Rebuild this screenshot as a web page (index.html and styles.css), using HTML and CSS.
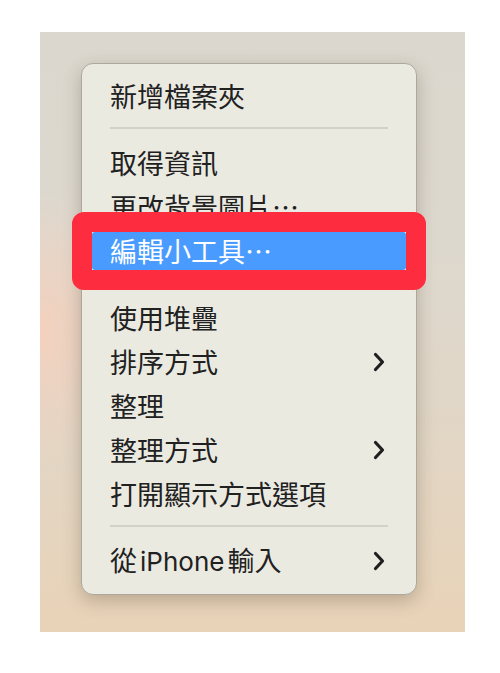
FILE: index.html
```html
<!DOCTYPE html>
<html lang="zh-Hant">
<head>
    <meta charset="UTF-8">
    <meta name="viewport" content="width=device-width, initial-scale=1.0">
    <title>桌面選單</title>
    <link rel="stylesheet" href="styles.css">
</head>
<body>
    <div class="wallpaper">
        <div class="menu">
            <div class="item"><span>新增檔案夾</span></div>
            <div class="separator"></div>
            <div class="item"><span>取得資訊</span></div>
            <div class="item"><span>更改背景圖片…</span></div>
            <div class="item selected"><span>編輯小工具…</span></div>
            <div class="separator"></div>
            <div class="item"><span>使用堆疊</span></div>
            <div class="item">
                <span>排序方式</span>
                <svg class="chevron" viewBox="0 0 12 20"><polyline points="2.5,2.5 9.5,10 2.5,17.5"/></svg>
            </div>
            <div class="item"><span>整理</span></div>
            <div class="item">
                <span>整理方式</span>
                <svg class="chevron" viewBox="0 0 12 20"><polyline points="2.5,2.5 9.5,10 2.5,17.5"/></svg>
            </div>
            <div class="item"><span>打開顯示方式選項</span></div>
            <div class="separator"></div>
            <div class="item">
                <span>從 <span class="latin">iPhone</span> 輸入</span>
                <svg class="chevron" viewBox="0 0 12 20"><polyline points="2.5,2.5 9.5,10 2.5,17.5"/></svg>
            </div>
        </div>
    </div>
</body>
</html>
```

FILE: styles.css
```css
body {
    margin: 0;
    padding: 32px 0 0 40px;
    background: #fff;
    font-family: "Noto Sans CJK TC", "Noto Sans", sans-serif;
    color: #212121;
}

.wallpaper {
    width: 425px;
    height: 600px;
    padding: 31px 0 0 41px;
    box-sizing: border-box;
    background:
        radial-gradient(ellipse 90px 140px at 0% 50%, rgba(246, 208, 188, 0.9), rgba(246, 208, 188, 0) 100%),
        linear-gradient(180deg, #dbd7ce 0%, #ddd8ce 35%, #e1d6c6 65%, #e9d3b8 100%);
}

.menu {
    display: flex;
    flex-direction: column;
    width: 336px;
    box-sizing: border-box;
    padding: 10px 0 11px;
    background: #ebeae1;
    border: 1px solid #aea89c;
    border-radius: 12px;
    box-shadow: 0 6px 18px rgba(70, 55, 35, 0.28);
}

.item {
    position: relative;
    display: flex;
    align-items: center;
    justify-content: space-between;
    height: 38px;
    margin: 3px 10px;
    padding: 0 21px 0 18px;
    font-size: 27px;
    line-height: 38px;
    border-radius: 3px;
}

.latin {
    font-family: Inter, "Noto Sans", sans-serif;
    font-size: 26px;
    margin: 0 -3px;
}

.chevron {
    width: 12px;
    height: 20px;
    fill: none;
    stroke: #1f1f1f;
    stroke-width: 3.2;
    stroke-linecap: round;
    stroke-linejoin: round;
}

.selected {
    background: #4a9bff;
    color: #fff;
}

/* red annotation frame drawn over the menu */
.selected::after {
    content: "";
    position: absolute;
    inset: -20px;
    border: 20px solid #fe2c3f;
    border-radius: 12px;
}

.separator {
    height: 2px;
    margin: 9px 28px 12px 28px;
    background: #d4d2c8;
}
```
